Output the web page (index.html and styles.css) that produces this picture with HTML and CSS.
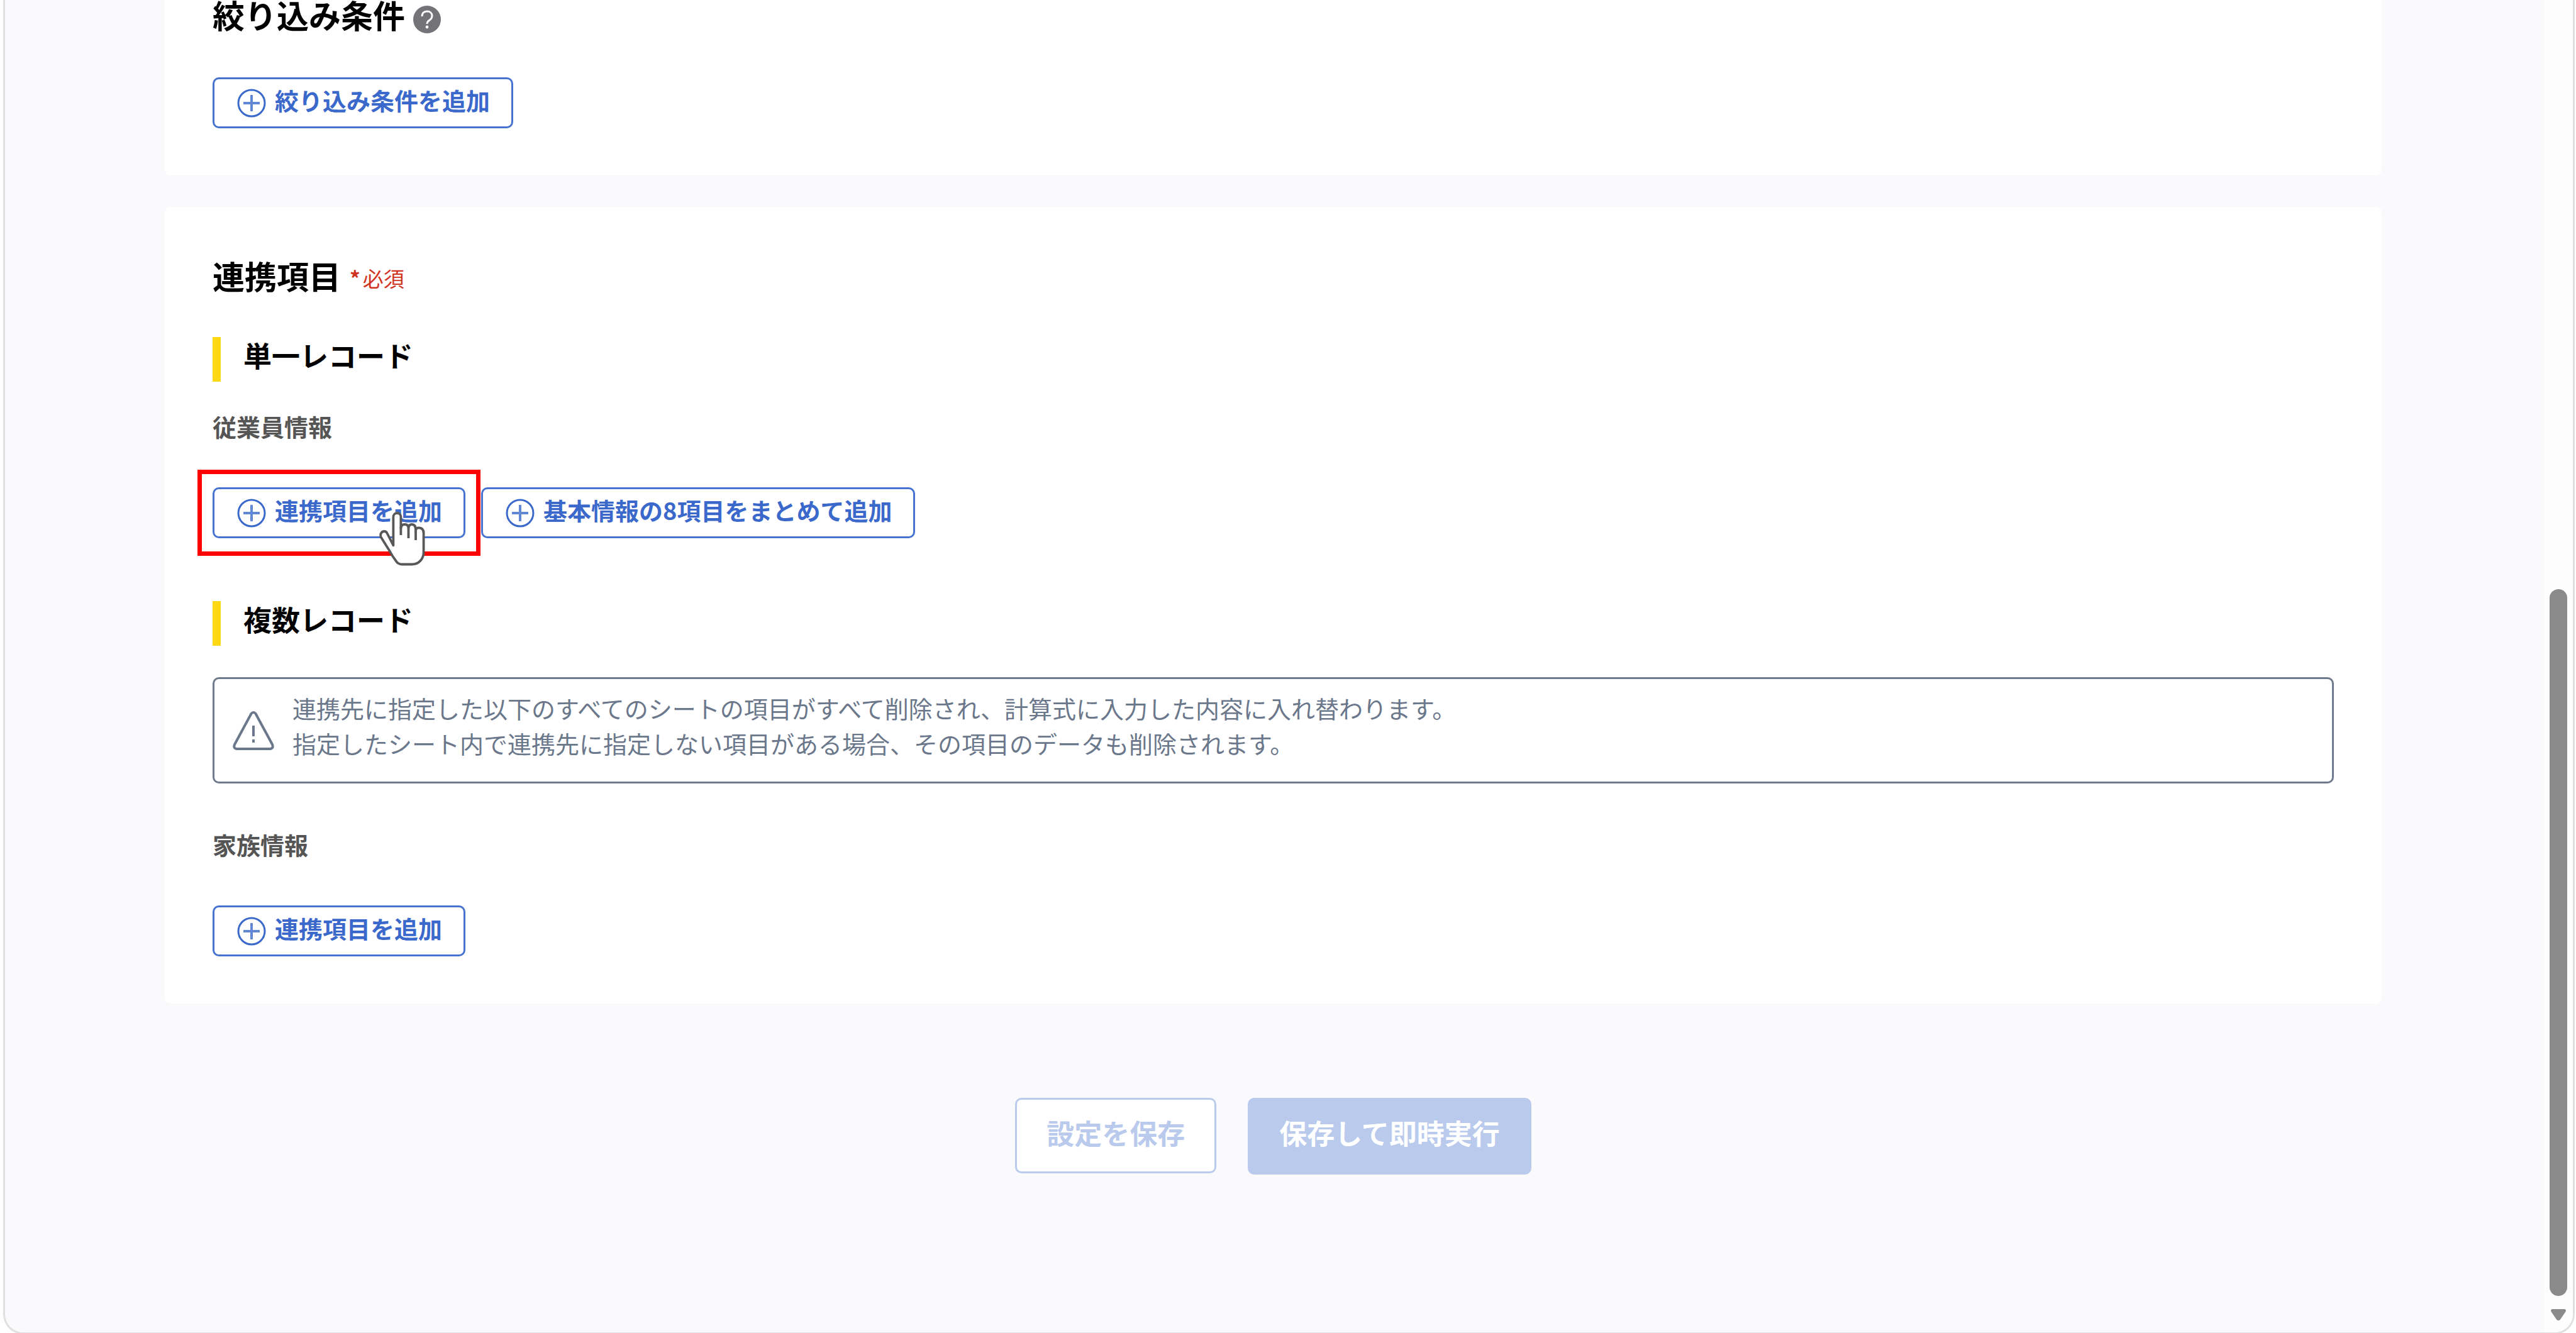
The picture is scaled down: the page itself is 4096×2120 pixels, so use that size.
FILE: index.html
```html
<!DOCTYPE html>
<html lang="ja">
<head>
  <meta charset="utf-8">
  <title>連携設定</title>
  <link rel="stylesheet" href="styles.css">
</head>
<body>
  <svg class="sprite" aria-hidden="true">
    <symbol id="icon-plus" viewBox="0 0 48 48">
      <circle cx="25" cy="24" r="21" fill="none" stroke="currentColor" stroke-width="3"/>
      <path d="M25 11v26M12 24h26" fill="none" stroke="currentColor" stroke-width="4" opacity=".8"/>
    </symbol>
  </svg>

  <div class="frame">
    <main class="content">
      <section class="card card--top">
        <div class="title-row">
          <h2 class="title">絞り込み条件</h2>
          <button class="help" type="button" aria-label="ヘルプ">
            <svg viewBox="0 0 46 46" aria-hidden="true">
              <circle cx="23" cy="23" r="22" fill="#737378"/>
              <path d="M15 18c0-5 3-8 8-8s8 3 8 7c0 3-1 5-4 7-3 2-4 3-4 6" fill="none" stroke="#fff" stroke-width="3"/>
              <circle cx="23" cy="35" r="2.4" fill="#fff"/>
            </svg>
          </button>
        </div>
        <button class="add" type="button"><svg class="add-icon" aria-hidden="true"><use href="#icon-plus"/></svg><span class="add-label">絞り込み条件を追加</span></button>
      </section>

      <section class="card">
        <div class="heading-row">
          <h2 class="heading">連携項目</h2>
          <span class="required"><span class="required-mark">*</span><span>必須</span></span>
        </div>

        <h3 class="subheading">単一レコード</h3>
        <h4 class="group">従業員情報</h4>
        <div class="actions">
          <div class="highlight">
            <button class="add" type="button"><svg class="add-icon" aria-hidden="true"><use href="#icon-plus"/></svg><span class="add-label">連携項目を追加</span></button>
            <svg class="pointer" viewBox="0 0 73 86" aria-hidden="true">
              <path d="M22.4 53.4V8a6 6 0 0 1 12 0V26Q35 20 40.5 20Q46.5 20 46.5 26Q47 20 52 20Q58 20 58 29Q59 25 64 25.5Q70.6 26 70.6 34V64C70.6 75 63 83.5 52 83.5H37Q31 83.5 28 80Q21 71 17 63L2.6 40C1 35 4 31 8 31Q11 31 12.5 34Z" fill="#fff" stroke="#595757" stroke-width="3.8" stroke-linejoin="round"/>
              <path d="M34.4 24V37M46.5 25V42M58 27V45" fill="none" stroke="#595757" stroke-width="3.8"/>
            </svg>
          </div>
          <button class="add" type="button"><svg class="add-icon" aria-hidden="true"><use href="#icon-plus"/></svg><span class="add-label">基本情報の8項目をまとめて追加</span></button>
        </div>

        <h3 class="subheading subheading--next">複数レコード</h3>
        <div class="notice">
          <svg class="notice-icon" viewBox="0 0 66 62" aria-hidden="true">
            <path d="M29.5 4Q33 0 36.5 4L63 53Q65.5 59.5 59 60H7Q.5 59.5 3 53Z" fill="none" stroke="currentColor" stroke-width="4" stroke-linejoin="round"/>
            <path d="M33 23v17M33 45v5" fill="none" stroke="currentColor" stroke-width="4"/>
          </svg>
          <p class="notice-text">連携先に指定した以下のすべてのシートの項目がすべて削除され、計算式に入力した内容に入れ替わります。<br>指定したシート内で連携先に指定しない項目がある場合、その項目のデータも削除されます。</p>
        </div>

        <h4 class="group group--next">家族情報</h4>
        <div class="actions">
          <button class="add" type="button"><svg class="add-icon" aria-hidden="true"><use href="#icon-plus"/></svg><span class="add-label">連携項目を追加</span></button>
        </div>
      </section>

      <div class="footer">
        <button class="save save--outline" type="button" disabled>設定を保存</button>
        <button class="save save--solid" type="button" disabled>保存して即時実行</button>
      </div>
    </main>

    <div class="scrollbar" aria-hidden="true">
      <div class="thumb"></div>
      <svg class="arrow" viewBox="0 0 24 18"><path d="M2 0h20q3 1 1.500 4L15 16.500q-3 3-6 0L.5 4Q-1 1 2 0z" fill="#8a8a8a"/></svg>
    </div>
  </div>
</body>
</html>
```

FILE: styles.css
```css
* {
  box-sizing: border-box;
}

body {
  margin: 0;
  height: 100vh;
  overflow: hidden;
  background: #fff;
  color: #000;
  font-family: "Noto Sans CJK JP", "Noto Sans", sans-serif;
}

h2,
h3,
h4,
p {
  margin: 0;
}

button {
  font-family: inherit;
}

.sprite {
  display: none;
}

/* Browser window edge around the page and its scrollbar */
.frame {
  display: flex;
  min-height: calc(100vh + 2px);
  margin: 0 2px 0 5px;
  border: 3px solid #e0e0e0;
  border-top: 0;
  border-radius: 0 0 32px 32px;
  overflow: hidden;
  background: #fafafc;
}

.content {
  flex: 1;
  padding: 0 258px 0 254px;
}

.card {
  margin-bottom: 50px;
  padding: 75px 76px;
  border-radius: 10px;
  background: #fff;
}

.card--top {
  padding-top: 0;
  border-radius: 0 0 10px 10px;
}

/* Headings */
.title-row {
  display: flex;
  align-items: flex-start;
  gap: 12px;
  margin-bottom: 69px;
}

.title {
  font-size: 51px;
  line-height: 46px;
}

.help {
  width: 46px;
  height: 46px;
  margin-top: 8px;
  padding: 0;
  border: 0;
  background: none;
}

.help svg {
  display: block;
}

.heading-row {
  display: flex;
  align-items: center;
  gap: 14px;
  margin-bottom: 64px;
}

.heading {
  font-size: 51px;
  line-height: 68px;
}

.required {
  display: flex;
  gap: 4px;
  padding-top: 8px;
  color: #d0331f;
  font-size: 33px;
  line-height: 48px;
}

.required-mark {
  font-weight: 700;
}

.subheading {
  padding: 0 0 14px 36px;
  border-left: 13px solid #ffd814;
  font-size: 45px;
  line-height: 57px;
}

.subheading--next {
  margin-top: 100px;
}

.group {
  margin: 44px 0 70px;
  color: #555;
  font-size: 38px;
  line-height: 54px;
}

.group--next {
  margin-top: 70px;
}

/* Add buttons */
.actions {
  display: flex;
  gap: 25px;
}

.add {
  display: flex;
  align-items: center;
  gap: 14px;
  height: 81px;
  padding: 0 34px;
  border: 3px solid #4673d0;
  border-radius: 10px;
  background: #fff;
  color: #3b69cb;
  font-size: 38px;
  font-weight: 700;
  line-height: 54px;
}

.add-icon {
  width: 48px;
  height: 48px;
}

.add-label {
  padding-bottom: 10px;
}

.highlight {
  position: relative;
}

.highlight::after {
  content: "";
  position: absolute;
  inset: -28px -24px;
  border: 7px solid #f00;
  pointer-events: none;
}

.pointer {
  position: absolute;
  z-index: 1;
  top: 39px;
  right: 64px;
  width: 73px;
  height: 86px;
}

/* Warning */
.notice {
  display: flex;
  align-items: center;
  gap: 29px;
  margin-top: 50px;
  padding: 0 29px;
  border: 3px solid #6f7b8d;
  border-radius: 10px;
  color: #6b778a;
}

.notice-icon {
  width: 66px;
  height: 62px;
}

.notice-text {
  padding: 18px 0 33px;
  font-size: 38px;
  line-height: 56px;
}

/* Save buttons */
.footer {
  display: flex;
  justify-content: center;
  align-items: flex-start;
  gap: 50px;
  padding: 100px 0;
}

.save {
  padding: 25px 47px 34px;
  border: 3px solid #b9caed;
  border-radius: 10px;
  font-size: 44px;
  font-weight: 700;
  line-height: 55px;
}

.save--outline {
  background: #fff;
  color: #b9caed;
}

.save--solid {
  padding-bottom: 36px;
  background: #b9caed;
  color: #fff;
}

/* Scrollbar */
.scrollbar {
  display: flex;
  flex-direction: column;
  justify-content: flex-end;
  align-items: center;
  gap: 21px;
  width: 46px;
  padding-bottom: 19px;
  background: #fdfdfd;
}

.thumb {
  width: 28px;
  height: 53vh;
  border-radius: 14px;
  background: #8a8a8a;
}

.arrow {
  width: 24px;
  height: 18px;
}
```
